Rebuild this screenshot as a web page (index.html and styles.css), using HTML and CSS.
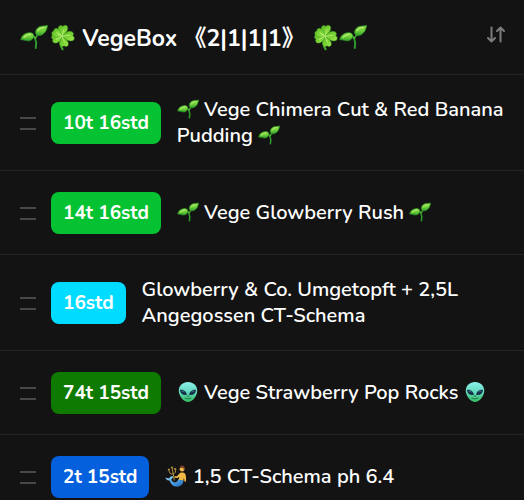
FILE: index.html
```html
<!DOCTYPE html>
<html lang="de">
<head>
<meta charset="utf-8">
<meta name="viewport" content="width=device-width, initial-scale=1">
<title>VegeBox</title>
<link rel="stylesheet" href="styles.css">
</head>
<body>
<svg class="defs" aria-hidden="true">
  <defs>
    <linearGradient id="leaf" x1="0" y1="0" x2="0" y2="1">
      <stop offset="0" stop-color="#8fdc4a"/><stop offset=".5" stop-color="#74d03c"/><stop offset="1" stop-color="#2fa02a"/>
    </linearGradient>
    <linearGradient id="petal" x1="0" y1="0" x2="1" y2="1">
      <stop offset="0" stop-color="#57b823"/><stop offset=".6" stop-color="#7ed636"/><stop offset="1" stop-color="#a9ed58"/>
    </linearGradient>
    <linearGradient id="skin" x1="0" y1="0" x2="0" y2="1">
      <stop offset="0" stop-color="#8df0ee"/><stop offset=".5" stop-color="#62d9bd"/><stop offset="1" stop-color="#35bd62"/>
    </linearGradient>
    <linearGradient id="tail" x1="0" y1="0" x2="1" y2="1">
      <stop offset="0" stop-color="#9ad8f5"/><stop offset=".5" stop-color="#4aa3e6"/><stop offset="1" stop-color="#2462b5"/>
    </linearGradient>
    <symbol id="sprout" viewBox="0 0 24 24">
      <path d="M12.800 12.500C14.200 16 14 19.500 13.500 21.500" fill="none" stroke="#2f9a2c" stroke-width="1.700" stroke-linecap="round"/>
      <path d="M10 11.500q2.400-.6 3.200 2.200q.2-2 2.200-3.600" fill="none" stroke="#4fb236" stroke-width="1.200"/>
      <g fill="url(#leaf)" stroke="#2c9a26" stroke-width=".7" stroke-linejoin="round">
        <path d="M.7 14.300C1.500 10.500 4.500 8.400 8.200 8.300c2.600 0 3.900 1.300 3.600 3.300c-.7 3-3.700 4.100-6.200 3.500c-1.900-.5-3.100-.9-4.900-.8z"/>
        <path d="M23.500 2.100c-.4 4.700-3 7.700-6.100 8.500c-2.500.5-3.900-.5-4-2.500c.1-3.100 2.400-5.200 5.500-5.400c1.900-.1 2.900-.1 4.600-.6z"/>
      </g>
      <path d="M3.500 12.300q2.400-2.500 5.500-2.700M21 3.700q-3.900.1-5.600 3" fill="none" stroke="#b9f073" stroke-width="1" stroke-linecap="round"/>
    </symbol>
    <symbol id="clover" viewBox="0 0 24 24">
      <path d="M11.500 11.500c-1.600 4.500-1.300 7.500 1 11" fill="none" stroke="#43a82c" stroke-width="1.800" stroke-linecap="round"/>
      <g fill="url(#petal)" stroke="#389a20" stroke-width=".4">
        <path d="M12 11.500C8.300 8.200 8.300 5 9.200 3.200c.8-1.500 2.700-1.400 3.500-.2c1.300-1.600 3.400-1.200 4.100.3c.6 2.800-1.400 5.700-4.800 8.200z"/>
        <path d="M12 11.500c3.500-4.500 6.400-5 8.600-4c1.500.9 1.500 2.500.6 3.400c1.700.9 1.700 3 .4 4c-2.600 1.200-6-.2-9.600-3.400z"/>
        <path d="M12 11.500c4.400 2.500 6 5.200 5.300 7.400c-.8 1.600-2.700 1.600-3.500.6c-1.300 1.200-3.200.8-3.700-.9c-.5-2.400.2-4.700 1.900-7.100z"/>
        <path d="M12 11.500c-1.700 4.600-4.200 6.200-6.600 5.600c-1.600-.6-1.800-2.200-1.100-3.200c-1.600-.8-1.700-2.700-.5-3.700c2.300-1.300 5.100-.8 8.200 1.300z"/>
        <path d="M12 11.500c-3.600 1-7 .6-8.400-1.300c-.9-1.600 0-3.100 1.300-3.300c-.1-1.600 1.500-2.700 3-2.200c2.200 1.100 3.500 3.800 4.100 6.800z"/>
      </g>
      <path d="M12 11.500l1.700-6M12 11.500l6.800-1.200M12 11.500l2.300 5.200M12 11.500l-5.500 2.700M12 11.500l-4.900-3.800" fill="none" stroke="#c6f584" stroke-width=".7"/>
    </symbol>
    <symbol id="alien" viewBox="0 0 24 24">
      <path d="M12 1C6.200 1 1.900 5 1.900 10.600C1.900 16.500 7.600 23 12 23s10.100-6.500 10.100-12.400C22.100 5 17.800 1 12 1z" fill="url(#skin)"/>
      <path d="M3.200 9.800c3.200-.7 7 1.200 7.500 5.200c-3.700 1-7.200-1.200-7.500-5.200zM20.800 9.800c-3.200-.7-7 1.200-7.500 5.200c3.700 1 7.200-1.200 7.500-5.200z" fill="#16324b"/>
      <path d="M5 10.900q1.900 0 3 1M19 10.900q-1.900 0-3 1" fill="none" stroke="#4f7f9c" stroke-width=".9"/>
      <path d="M8.600 18.600q3.400 2.400 6.800 0M11.200 16.300v.6M12.800 16.300v.6" fill="none" stroke="#14653f" stroke-width=".9" stroke-linecap="round"/>
    </symbol>
    <symbol id="merman" viewBox="0 0 24 24">
      <path d="M10.200 17L7.800 3M4.300 5.200c.3 3.600 1.600 4.900 4.200 4.500s3.500-2 2.700-5.500M3.400 6l.7-1.800l1.400 1.200M6.800 3.800l.8-2l1.300 1.600M10.200 5.200l.8-1.900l1.400 1.300" fill="none" stroke="#c39a45" stroke-width="1"/>
      <path d="M16.300 8.800c2-.9 5-.6 5.900 1.200c.9 2.200 1 5 .5 8.200l-1.500-.2l-.5-4.500l-.8 3.900l-5.200-1.400l1-3.200l-2.200 1.400l-3.300-.4l.2-1.500l2.700-.1z" fill="#f2b944"/>
      <path d="M14.500 15.500c2.200 1.200 3.900 1.500 5.500 1.100c.3 3.800-2.300 6.800-6.900 7c-4.200.1-6.800-2.800-8-6.800c-2 .8-3.900-.7-4.600-3.100c2.200 1.100 3.700.9 4.700.1c.7-1.100 1.900-1.700 3.700-1.300c-.3 1.500-1.100 2.600-2.200 3.400c1.200 2.200 2.600 3.500 4.500 3c1.700-.4 2.800-1.700 3.300-3.400z" fill="url(#tail)"/>
      <circle cx="18.600" cy="4.600" r="2.600" fill="#f3bd4d"/>
      <path d="M15.900 3.600C15.900 1 17.600.3 19 .5c2.200.2 3 2 2.300 4.600l-.8.5c0-1.400-.5-2.200-1.700-2.500z" fill="#754127"/>
      <path d="M17 6.300q1.300 1.300 2.900.6" fill="none" stroke="#754127" stroke-width=".8"/>
    </symbol>
  </defs>
</svg>
<main class="list">
  <header class="head">
    <h1 class="title"><svg class="emoji" role="img" aria-label="🌱"><use href="#sprout"/></svg><svg class="emoji" role="img" aria-label="🍀"><use href="#clover"/></svg> VegeBox 《2|1|1|1》 <svg class="emoji" role="img" aria-label="🍀"><use href="#clover"/></svg><svg class="emoji" role="img" aria-label="🌱"><use href="#sprout"/></svg></h1>
    <button class="sort" type="button" aria-label="Sortieren">
      <svg class="sort-icon" viewBox="0 0 20 18"><path d="M5.500 1.500v14M2 12l3.500 3.500L9 12M14.500 15.500v-14M11 5l3.500-3.500L18 5"/></svg>
    </button>
  </header>
  <ul class="rows">
    <li class="row">
      <button class="grip" type="button" aria-label="Verschieben"></button>
      <span class="badge green">10t 16std</span>
      <p class="name"><svg class="emoji" role="img" aria-label="🌱"><use href="#sprout"/></svg> Vege Chimera Cut &amp; Red Banana Pudding <svg class="emoji" role="img" aria-label="🌱"><use href="#sprout"/></svg></p>
    </li>
    <li class="row">
      <button class="grip" type="button" aria-label="Verschieben"></button>
      <span class="badge green">14t 16std</span>
      <p class="name"><svg class="emoji" role="img" aria-label="🌱"><use href="#sprout"/></svg> Vege Glowberry Rush <svg class="emoji" role="img" aria-label="🌱"><use href="#sprout"/></svg></p>
    </li>
    <li class="row">
      <button class="grip" type="button" aria-label="Verschieben"></button>
      <span class="badge cyan">16std</span>
      <p class="name">Glowberry &amp; Co. Umgetopft + 2,5L Angegossen CT-Schema</p>
    </li>
    <li class="row">
      <button class="grip" type="button" aria-label="Verschieben"></button>
      <span class="badge forest">74t 15std</span>
      <p class="name"><svg class="emoji" role="img" aria-label="👽"><use href="#alien"/></svg> Vege Strawberry Pop Rocks <svg class="emoji" role="img" aria-label="👽"><use href="#alien"/></svg></p>
    </li>
    <li class="row">
      <button class="grip" type="button" aria-label="Verschieben"></button>
      <span class="badge blue">2t 15std</span>
      <p class="name"><svg class="emoji" role="img" aria-label="🧜‍♂️"><use href="#merman"/></svg> 1,5 CT-Schema ph 6.4</p>
    </li>
  </ul>
</main>
</body>
</html>
```
FILE: styles.css
```css
* { box-sizing: border-box; }
html { background: #131313; }
body {
  margin: 0;
  overflow-x: hidden;
  color: #fff;
  font: 700 19px/26px Nunito, "Open Sans", "Noto Sans CJK SC", sans-serif;
}
.defs { position: absolute; width: 0; height: 0; }
.head {
  display: flex;
  align-items: center;
  justify-content: space-between;
  padding: 23px 18px 20px 20px;
  border-bottom: 1px solid #242424;
}
.title { margin: 0; font-size: 23px; font-weight: 700; line-height: 30px; }
.emoji { width: 22px; height: 22px; vertical-align: -4px; }
.title .emoji { width: 28px; height: 28px; vertical-align: -5px; }
button { border: 0; padding: 0; background: none; cursor: pointer; }
.sort { display: flex; margin-bottom: 8px; }
.sort-icon {
  width: 20px;
  height: 18px;
  fill: none;
  stroke: #7c7c7c;
  stroke-width: 2;
  stroke-linecap: round;
  stroke-linejoin: round;
}
.rows { margin: 0; padding: 0; list-style: none; }
.row {
  display: flex;
  align-items: center;
  padding: 21px 16px 20px 20px;
  border-bottom: 1px solid #242424;
}
.grip {
  flex: none;
  width: 16px;
  height: 13px;
  margin-right: 15px;
  border: solid #484848;
  border-width: 2px 0;
}
.badge {
  flex: none;
  margin-right: 16px;
  padding: 8px 12px;
  border-radius: 8px;
}
.green { background: #04c231; }
.cyan { background: #00dcff; }
.forest { background: #0f7a00; }
.blue { background: #0460dc; }
.name { margin: 0; padding: 1px 0; font-size: 20px; font-weight: 600; }
```
